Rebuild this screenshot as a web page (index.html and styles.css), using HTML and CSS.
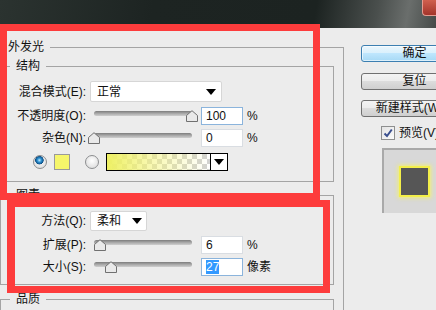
FILE: index.html
```html
<!DOCTYPE html>
<html lang="zh-CN">

<head>
    <meta charset="UTF-8">
    <meta name="viewport" content="width=device-width, initial-scale=1.0">
    <title>图层样式 - 外发光</title>
    <link rel="stylesheet" href="styles.css">
</head>

<body>
    <div class="titlebar"><span class="close-btn"></span></div>

    <div class="dialog">
        <div class="options">
            <fieldset class="group outer">
                <legend>外发光</legend>

                <fieldset class="group sub structure">
                    <legend>结构</legend>
                    <div class="row blend-row">
                        <label>混合模式(E):</label>
                        <div class="select blend"><span>正常</span><i class="caret"></i></div>
                    </div>
                    <div class="row">
                        <label>不透明度(O):</label>
                        <div class="slider"><div class="track"></div><span class="thumb" style="--v: 100"><svg width="12" height="12" viewBox="0 0 12 12"><path d="M0.5 11.5V5.5L6 0.7L11.5 5.5V11.5Z" fill="#e9e9e9" stroke="#707070"/></svg></span></div>
                        <div class="field active">100</div>
                        <span class="unit">%</span>
                    </div>
                    <div class="row">
                        <label>杂色(N):</label>
                        <div class="slider"><div class="track"></div><span class="thumb" style="--v: 0"><svg width="12" height="12" viewBox="0 0 12 12"><path d="M0.5 11.5V5.5L6 0.7L11.5 5.5V11.5Z" fill="#e9e9e9" stroke="#707070"/></svg></span></div>
                        <div class="field">0</div>
                        <span class="unit">%</span>
                    </div>
                    <div class="row color-row">
                        <span class="radio checked"></span>
                        <span class="swatch"></span>
                        <span class="radio"></span>
                        <div class="ramp-picker">
                            <div class="ramp"></div>
                            <div class="ramp-arrow"><i class="caret"></i></div>
                        </div>
                    </div>
                </fieldset>

                <fieldset class="group sub elements">
                    <legend>图素</legend>
                    <div class="row method-row">
                        <label>方法(Q):</label>
                        <div class="select method"><span>柔和</span><i class="caret"></i></div>
                    </div>
                    <div class="row">
                        <label>扩展(P):</label>
                        <div class="slider"><div class="track"></div><span class="thumb" style="--v: 6"><svg width="12" height="12" viewBox="0 0 12 12"><path d="M0.5 11.5V5.5L6 0.7L11.5 5.5V11.5Z" fill="#e9e9e9" stroke="#707070"/></svg></span></div>
                        <div class="field">6</div>
                        <span class="unit">%</span>
                    </div>
                    <div class="row">
                        <label>大小(S):</label>
                        <div class="slider"><div class="track"></div><span class="thumb" style="--v: 17"><svg width="12" height="12" viewBox="0 0 12 12"><path d="M0.5 11.5V5.5L6 0.7L11.5 5.5V11.5Z" fill="#e9e9e9" stroke="#707070"/></svg></span></div>
                        <div class="field active"><span class="selected">27</span></div>
                        <span class="unit">像素</span>
                    </div>
                </fieldset>

                <fieldset class="group sub quality">
                    <legend>品质</legend>
                </fieldset>
            </fieldset>
        </div>

        <div class="actions">
            <button class="btn default">确定</button>
            <button class="btn">复位</button>
            <button class="btn">新建样式(W)...</button>
            <div class="preview-check">
                <span class="checkbox"><svg width="12" height="12" viewBox="0 0 12 12"><path d="M2.5 6.5L5 9L9.8 2.5" fill="none" stroke="#3a4f8e" stroke-width="2"/></svg></span>
                <span>预览(V)</span>
            </div>
            <div class="preview"><div class="glow-square"></div></div>
        </div>
    </div>

    <!-- 标注框 -->
    <div class="mark mark-top"></div>
    <div class="mark mark-bottom"></div>
</body>

</html>
```

FILE: styles.css
```css
* {
    box-sizing: border-box;
}

html,
body {
    margin: 0;
}

body {
    position: relative;
    width: 436px;
    height: 310px;
    overflow: hidden;
    background: #ececec;
    font-family: "Liberation Sans", "Noto Sans CJK SC", sans-serif;
    font-size: 12px;
    line-height: 16px;
    color: #111;
}

/* window title bar */
.titlebar {
    height: 28px;
    display: flex;
    justify-content: flex-end;
    background: linear-gradient(100deg, #2b3330 0%, #1d2422 35%, #1c2321 72%, #4a4f4d 86%, #6a6e6c 93%, #454a48 100%);
}

.close-btn {
    width: 14px;
    height: 16px;
    background: linear-gradient(#d0604f, #a3342a);
    border-left: 1px solid #e59b90;
    border-bottom: 1px solid #e59b90;
    border-radius: 0 0 0 4px;
}

.dialog {
    display: flex;
}

/* left option panel */
.options {
    flex: none;
    width: 347px;
    margin-left: -3px;
}

.group {
    margin: 0;
    padding: 0;
    min-width: 0;
    border: 1px solid #a4a4a4;
}

.group legend {
    padding: 0 6px;
    line-height: 16px;
}

.outer {
    margin-top: 11px;
    padding: 0 9px 0 2px;
}

.outer > legend {
    margin-left: 2px;
}

.sub > legend {
    margin-left: 9px;
}

.structure {
    margin-top: 3px;
    padding: 7px 0 10px;
}

.elements {
    margin-top: 5px;
    padding: 8px 0 8px;
}

.quality {
    margin-top: 6px;
    height: 80px;
}

.row {
    display: flex;
    align-items: center;
    height: 18px;
}

.row + .row {
    margin-top: 4px;
}

.structure .row:nth-child(3) {
    margin-top: 5px;
}

.row label {
    flex: none;
    width: 85px;
    text-align: right;
}

.blend-row {
    height: 21px;
}

.method-row {
    height: 20px;
}

.elements .row:nth-child(3) {
    margin-top: 5px;
}

/* drop-down boxes */
.select {
    display: flex;
    align-items: center;
    justify-content: space-between;
    height: 100%;
    margin-left: 4px;
    padding: 0 5px 0 6px;
    background: #fff;
    border: 1px solid #d6d6d6;
    border-radius: 2px;
}

.blend {
    width: 132px;
}

.method {
    width: 57px;
    padding-right: 4px;
}

.caret {
    width: 0;
    height: 0;
    border-left: 5px solid transparent;
    border-right: 5px solid transparent;
    border-top: 6px solid #000;
}

/* sliders */
.slider {
    position: relative;
    flex: none;
    width: 110px;
    height: 18px;
    margin-left: 2px;
}

.track {
    height: 5px;
    margin: 4px 6px 0;
    border-radius: 3px;
    background: linear-gradient(#7c7c7c, #a9a9a9 50%, #cfcfcf);
}

.thumb {
    position: absolute;
    top: 3px;
    left: calc(var(--v) * 0.98px);
    width: 12px;
    height: 12px;
}

.thumb svg {
    display: block;
}

.field {
    flex: none;
    width: 42px;
    height: 18px;
    margin-left: 3px;
    padding: 0 4px;
    background: #fff;
    border: 1px solid #d9dde2;
    line-height: 16px;
}

.field.active {
    border-color: #8bb4dc;
}

.selected {
    background: #3399ff;
    color: #fff;
}

.unit {
    margin-left: 4px;
}

/* colour row */
.color-row {
    margin-top: 6px !important;
}

.radio {
    flex: none;
    width: 14px;
    height: 14px;
    border-radius: 50%;
    border: 1px solid #8c8e90;
    background: radial-gradient(circle at 50% 40%, #fff, #d6d6d6);
}

.radio.checked {
    margin-left: 32px;
    background:
        radial-gradient(circle at 45% 35%, #c8ecff 0, #2f93d2 2px, #0d4f86 4px, transparent 4.5px),
        radial-gradient(circle at 50% 40%, #fff, #d6d6d6);
}

.swatch {
    flex: none;
    width: 16px;
    height: 16px;
    margin: 0 15px 0 7px;
    background: #f6f66a;
    border: 1px solid #9a9a9a;
}

.ramp-picker {
    display: flex;
    width: 122px;
    height: 18px;
    margin-left: 7px;
    border: 1px solid #000;
}

.ramp {
    flex: 1;
    background:
        linear-gradient(to right, #eef064, rgba(244, 244, 120, 0.55) 45%, rgba(255, 255, 255, 0)),
        conic-gradient(#d2d2d2 25%, #fff 0 50%, #d2d2d2 0 75%, #fff 0) 0 0 / 10px 10px;
}

.ramp-arrow {
    display: flex;
    align-items: center;
    justify-content: center;
    width: 17px;
    background: #fff;
    border-left: 1px solid #000;
}

/* right column */
.actions {
    display: flex;
    flex-direction: column;
    align-items: flex-start;
    padding: 17px 0 0 17px;
}

.btn {
    flex: none;
    width: 107px;
    height: 17px;
    padding: 0;
    font: inherit;
    line-height: 15px;
    color: #111;
    border: 1px solid #707070;
    border-radius: 3px;
    background: linear-gradient(#f3f3f3 0%, #ebebeb 50%, #dcdcdc 50%, #cfcfcf 100%);
}

.btn + .btn {
    margin-top: 11px;
}

.btn:nth-child(3) {
    margin-top: 10px;
}

.btn.default {
    border-color: #3c7fb1;
    background: linear-gradient(#eaf6fd 0%, #d9f0fc 50%, #bee6fd 50%, #a7d9f5 100%);
    box-shadow: inset 0 0 0 1px rgba(255, 255, 255, 0.6);
}

.preview-check {
    display: flex;
    align-items: center;
    margin: 9px 0 0 20px;
    height: 14px;
    white-space: nowrap;
}

.checkbox {
    display: flex;
    align-items: center;
    justify-content: center;
    width: 14px;
    height: 14px;
    margin-right: 4px;
    border: 1px solid #8e8f8f;
    background: linear-gradient(135deg, #e4e4e4, #fbfbfb);
}

.preview {
    width: 80px;
    height: 65px;
    margin: 8px 0 0 21px;
    padding: 16px 0 0 15px;
    background: #d8d8d8;
    border-top: 2px solid #a9a9a9;
    border-left: 2px solid #a9a9a9;
}

.glow-square {
    width: 31px;
    height: 31px;
    background: #565656;
    border: 2px solid #f3ef4a;
    box-shadow: 0 0 4px 1px rgba(246, 242, 100, 0.85);
}

/* red annotation frames */
.mark {
    position: absolute;
    border: 7px solid #fd3c3c;
}

.mark-top {
    left: 0;
    top: 24px;
    width: 320px;
    height: 176px;
}

.mark-bottom {
    left: 7px;
    top: 200px;
    width: 323px;
    height: 93px;
    border-left-width: 8px;
}
```
